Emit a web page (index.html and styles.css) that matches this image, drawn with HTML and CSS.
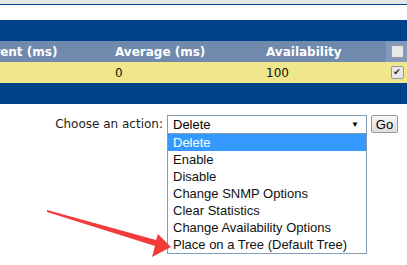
FILE: index.html
```html
<!DOCTYPE html>
<html lang="en">
<head>
    <meta charset="UTF-8">
    <title>Devices</title>
    <link rel="stylesheet" href="styles.css">
</head>
<body>
    <div class="topbar"></div>
    <div class="spacer"></div>

    <div class="table">
        <div class="band"></div>
        <div class="row head">
            <div class="cell first">Current (ms)</div>
            <div class="cell avg">Average (ms)</div>
            <div class="cell avail">Availability</div>
            <div class="cell check"><span class="box"></span></div>
        </div>
        <div class="row data">
            <div class="cell first"></div>
            <div class="cell avg">0</div>
            <div class="cell avail">100</div>
            <div class="cell check"><span class="box checked">&#10004;</span></div>
        </div>
        <div class="band"></div>
    </div>

    <div class="actions">
        <span class="label">Choose an action:</span>
        <div class="picker">
            <div class="current">Delete <span class="arrow">&#9660;</span></div>
            <div class="options">
                <div class="option selected">Delete</div>
                <div class="option">Enable</div>
                <div class="option">Disable</div>
                <div class="option">Change SNMP Options</div>
                <div class="option">Clear Statistics</div>
                <div class="option">Change Availability Options</div>
                <div class="option">Place on a Tree (Default Tree)</div>
            </div>
        </div>
        <button class="go">Go</button>
    </div>

    <!-- annotation arrow -->
    <svg class="pointer" width="407" height="265" viewBox="0 0 407 265">
        <polygon fill="#f33b3b" points="47,210 156,240 158,234 171,247 152,257 155,246 47,212"/>
    </svg>
</body>
</html>
```

FILE: styles.css
```css
:root {
    --blue: #00438a;
    --head: #6f8aad;
    --headcheck: #8299bc;
    --row: #f0e68c;
    --highlight: #3399ff;
}

body {
    margin: 0;
    background-color: #fff;
    font-family: "DejaVu Sans", Verdana, sans-serif;
}

.topbar {
    height: 4px;
    background-color: #e6e6e6;
    border-bottom: 1px solid var(--blue);
}

.spacer {
    height: 15px;
}

.table {
    overflow: hidden;
}

.band {
    height: 21px;
    background-color: var(--blue);
}

.row {
    display: flex;
    height: 21px;
    align-items: center;
}

.head {
    background-color: var(--head);
    color: #fff;
    font-weight: bold;
    font-size: 12px;
}

.data {
    background-color: var(--row);
    color: #111;
    font-size: 12px;
}

.cell {
    padding-left: 1px;
    box-sizing: border-box;
    height: 100%;
    display: flex;
    align-items: center;
    white-space: nowrap;
    flex-shrink: 0;
}

.first {
    width: 143px;
    margin-left: -29px;
    padding-left: 0;
    overflow: hidden;
}

.avg {
    width: 151px;
}

.avail {
    width: 121px;
}

.check {
    width: 21px;
    justify-content: center;
}

.head .check {
    background-color: var(--headcheck);
}

.box {
    width: 11px;
    height: 11px;
    border: 1px solid #9a9a9a;
    border-radius: 2px;
    background-color: #e8e8e8;
    display: flex;
    align-items: center;
    justify-content: center;
    font-size: 9px;
    font-weight: normal;
    color: #222;
    line-height: 1;
}

.actions {
    display: flex;
    justify-content: flex-end;
    align-items: flex-start;
    padding: 11px 9px 0 0;
    gap: 4px;
    font-family: "Liberation Sans", Arial, sans-serif;
}

.label {
    font-family: "DejaVu Sans", Verdana, sans-serif;
    font-size: 12px;
    color: #222;
    line-height: 19px;
}

.picker {
    width: 200px;
    font-size: 13px;
}

.current {
    height: 19px;
    box-sizing: border-box;
    border: 1px solid #7f9db9;
    padding-left: 5px;
    line-height: 17px;
    display: flex;
    justify-content: space-between;
}

.arrow {
    font-size: 8px;
    margin-right: 7px;
}

.options {
    margin-top: -1px;
    background-color: #fff;
    border: 1px solid #7f9db9;
}

.option {
    height: 17px;
    line-height: 17px;
    padding-left: 5px;
    color: #111;
}

.selected {
    background-color: var(--highlight);
    color: #fff;
}

.go {
    width: 27px;
    height: 18px;
    padding: 0;
    font-family: "Liberation Sans", Arial, sans-serif;
    font-size: 13px;
    border: 1px solid #999;
    border-radius: 2px;
    background: linear-gradient(#f6f6f6, #dedede);
}

.pointer {
    position: absolute;
    top: 0;
    left: 0;
    pointer-events: none;
}
```
